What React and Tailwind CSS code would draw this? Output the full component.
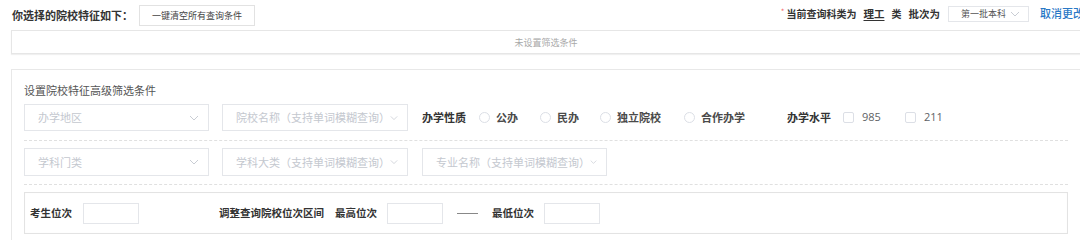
const Chevron = () => (
  <svg width="10" height="6" viewBox="0 0 10 6" fill="none">
    <path d="M1 1l4 4 4-4" stroke="#c9cdd4" strokeWidth="1" />
  </svg>
)

function Select({ placeholder, className }) {
  return (
    <div
      className={`h-full flex items-center justify-between pl-[13px] pr-[9px] border border-[#e4e6ea] bg-white ${className}`}
    >
      <span className="text-[11px] text-[#c4c8cf] whitespace-nowrap">{placeholder}</span>
      <Chevron />
    </div>
  )
}

function Radio({ label, className = '' }) {
  return (
    <div className={`flex items-center ${className}`}>
      <span className="w-[11px] h-[11px] rounded-full border border-[#dcdfe6] bg-white" />
      <span className="ml-[6px] text-[11px] font-bold text-[#4a4a4a]">{label}</span>
    </div>
  )
}

function Check({ label, className = '' }) {
  return (
    <div className={`flex items-center ${className}`}>
      <span className="w-[11px] h-[11px] rounded-[2px] border border-[#dcdfe6] bg-white" />
      <span className="ml-[8px] text-[11px] text-[#606266] font-['Open_Sans',sans-serif]">{label}</span>
    </div>
  )
}

function SmallInput({ className = '' }) {
  return <div className={`w-[56px] h-[21px] border border-[#e4e6ea] bg-white ${className}`} />
}

export default function App() {
  return (
    <div className="w-[1080px] h-[240px] overflow-hidden bg-white font-['Noto_Sans_CJK_SC','Noto_Sans',sans-serif] text-[#333]">
      <div className="w-[1100px] pl-[11px]">
        {/* Top bar */}
        <div className="h-[30px] flex items-center pr-[16px]">
          <span className="ml-[1px] text-[11px] font-bold text-[#333] leading-none">你选择的院校特征如下：</span>
          <button className="ml-[6px] w-[116px] h-[21px] border border-[#e2e2e2] bg-white text-[9px] text-[#444] leading-none">
            一键清空所有查询条件
          </button>

          <div className="ml-auto flex items-center -mt-[3px]">
            <span className="text-[8px] text-[#f56c6c] -mt-[4px] mr-[2px]">*</span>
            <span className="text-[10px] font-bold">当前查询科类为</span>
            <span className="ml-[7px] text-[10.5px] font-bold underline underline-offset-2">理工</span>
            <span className="ml-[7px] text-[10px] font-bold">类</span>
            <span className="ml-[7px] text-[10.5px] font-bold">批次为</span>
            <div className="ml-[8px] w-[81px] h-[16px] border border-[#e4e6ea] flex items-center justify-between pl-[12px] pr-[8px]">
              <span className="text-[9px] text-[#555] leading-none">第一批本科</span>
              <Chevron />
            </div>
            <span className="ml-[11px] text-[11px] font-medium text-[#2a78c6]">取消更改</span>
          </div>
        </div>

        {/* Selected conditions */}
        <div className="w-[1070px] h-[24px] border border-[#e6e6e6] flex items-center justify-center shadow-[0_1px_1px_#f0f0f0]">
          <span className="text-[9px] text-[#a8a8a8] leading-none">未设置筛选条件</span>
        </div>

        {/* Advanced filters */}
        <div className="mt-[15px] w-[1071px] h-[200px] border border-[#e8e8e8] px-[12px] pt-[12px]">
          <p className="text-[11px] leading-[16px] text-[#555]">设置院校特征高级筛选条件</p>

          <div className="mt-[6px] pb-[9px] w-[1044px] border-b border-dashed border-[#e0e0e0]">
            <div className="h-[27px] flex items-center">
              <Select placeholder="办学地区" className="w-[185px]" />
              <Select placeholder="院校名称（支持单词模糊查询）" className="ml-[13px] w-[186px] pr-[7px]" />
              <span className="ml-[14px] text-[11px] font-bold">办学性质</span>
              <Radio label="公办" className="ml-[13px]" />
              <Radio label="民办" className="ml-[22px]" />
              <Radio label="独立院校" className="ml-[21px]" />
              <Radio label="合作办学" className="ml-[23px]" />
              <span className="ml-[42px] text-[11px] font-bold">办学水平</span>
              <Check label="985" className="ml-[12px]" />
              <Check label="211" className="ml-[24px]" />
            </div>
          </div>

          <div className="pt-[7px] pb-[8px] w-[1044px] border-b border-dashed border-[#e0e0e0]">
            <div className="h-[28px] flex items-center">
              <Select placeholder="学科门类" className="w-[185px]" />
              <Select placeholder="学科大类（支持单词模糊查询）" className="ml-[13px] w-[186px] pr-[7px]" />
              <Select placeholder="专业名称（支持单词模糊查询）" className="ml-[14px] w-[185px] pr-[7px]" />
            </div>
          </div>

          <div className="mt-[7px] w-[1044px] h-[42px] border border-[#e3e3e3] shadow-[inset_0_0_1px_#eee] flex items-center pl-[5px]">
            <span className="text-[10.5px] font-bold">考生位次</span>
            <SmallInput className="ml-[11px]" />
            <span className="ml-[80px] text-[10.5px] font-bold">调整查询院校位次区间</span>
            <span className="ml-[11px] text-[10.5px] font-bold">最高位次</span>
            <SmallInput className="ml-[10px] w-[55px]" />
            <span className="ml-[14px] w-[21px] h-px bg-[#888]" />
            <span className="ml-[14px] text-[10.5px] font-bold">最低位次</span>
            <SmallInput className="ml-[10px]" />
          </div>
        </div>
      </div>
    </div>
  )
}
